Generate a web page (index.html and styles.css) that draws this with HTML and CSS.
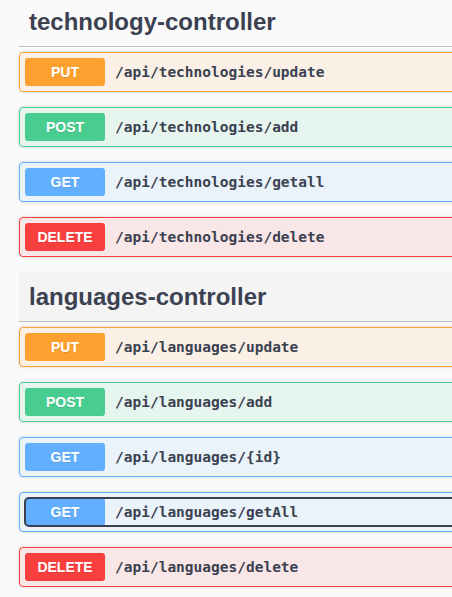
FILE: index.html
```html
<!DOCTYPE html>
<html lang="en">
<head>
<meta charset="utf-8">
<title>Swagger UI</title>
<link rel="stylesheet" href="styles.css">
</head>
<body>
<div class="wrapper">
  <section class="tag-section">
    <h3 class="opblock-tag">technology-controller</h3>
    <div class="opblock put"><div class="summary"><div class="control"><span class="method">PUT</span><span class="path">/api/technologies/update</span></div></div></div>
    <div class="opblock post"><div class="summary"><div class="control"><span class="method">POST</span><span class="path">/api/technologies/add</span></div></div></div>
    <div class="opblock get"><div class="summary"><div class="control"><span class="method">GET</span><span class="path">/api/technologies/getall</span></div></div></div>
    <div class="opblock delete"><div class="summary"><div class="control"><span class="method">DELETE</span><span class="path">/api/technologies/delete</span></div></div></div>
  </section>
  <section class="tag-section">
    <h3 class="opblock-tag is-hovered">languages-controller</h3>
    <div class="opblock put"><div class="summary"><div class="control"><span class="method">PUT</span><span class="path">/api/languages/update</span></div></div></div>
    <div class="opblock post"><div class="summary"><div class="control"><span class="method">POST</span><span class="path">/api/languages/add</span></div></div></div>
    <div class="opblock get"><div class="summary"><div class="control"><span class="method">GET</span><span class="path">/api/languages/{id}</span></div></div></div>
    <div class="opblock get"><div class="summary"><div class="control is-focused"><span class="method">GET</span><span class="path">/api/languages/getAll</span></div></div></div>
    <div class="opblock delete"><div class="summary"><div class="control"><span class="method">DELETE</span><span class="path">/api/languages/delete</span></div></div></div>
  </section>
</div>
</body>
</html>
```

FILE: styles.css
```css
html, body {
  overflow: hidden;
}

body {
  margin: 0;
  background: #fafafa;
  color: #3b4151;
  font-family: "Liberation Sans", Arial, sans-serif;
}

.wrapper {
  width: 900px;
  padding-left: 19px;
  margin-top: -3px;
}

.opblock-tag {
  margin: 0 0 5px;
  padding: 10px 20px 10px 10px;
  font-size: 24px;
  line-height: 29px;
  font-weight: 700;
  color: #3b4151;
  border-bottom: 1px solid rgba(59, 65, 81, 0.3);
}

.opblock-tag.is-hovered {
  background: rgba(0, 0, 0, 0.025);
}

.opblock {
  margin: 0 0 15px;
  border: 1px solid;
  border-radius: 4px;
  box-shadow: 0 0 3px rgba(0, 0, 0, 0.19);
}

.summary {
  display: flex;
  align-items: center;
  padding: 5px;
}

.control {
  flex: 1;
  display: flex;
  align-items: center;
  border-radius: 4px;
}

.control.is-focused {
  outline: 2px solid #3b4151;
  outline-offset: -1px;
}

.method {
  min-width: 80px;
  padding: 6px 0;
  border-radius: 3px;
  text-align: center;
  color: #fff;
  font-size: 14px;
  line-height: 16px;
  font-weight: 700;
  text-shadow: 0 1px 0 rgba(0, 0, 0, 0.1);
}

.path {
  padding: 0 10px;
  font-family: "DejaVu Sans Mono", "Liberation Mono", monospace;
  font-size: 14.5px;
  font-weight: 700;
  color: #3b4151;
}

.put {
  border-color: #fca130;
  background: rgba(252, 161, 48, 0.1);
}
.put .method { background: #fca130; }

.post {
  border-color: #49cc90;
  background: rgba(73, 204, 144, 0.1);
}
.post .method { background: #49cc90; }

.get {
  border-color: #61affe;
  background: rgba(97, 175, 254, 0.1);
}
.get .method { background: #61affe; }

.delete {
  border-color: #f93e3e;
  background: rgba(249, 62, 62, 0.1);
}
.delete .method { background: #f93e3e; }
```
